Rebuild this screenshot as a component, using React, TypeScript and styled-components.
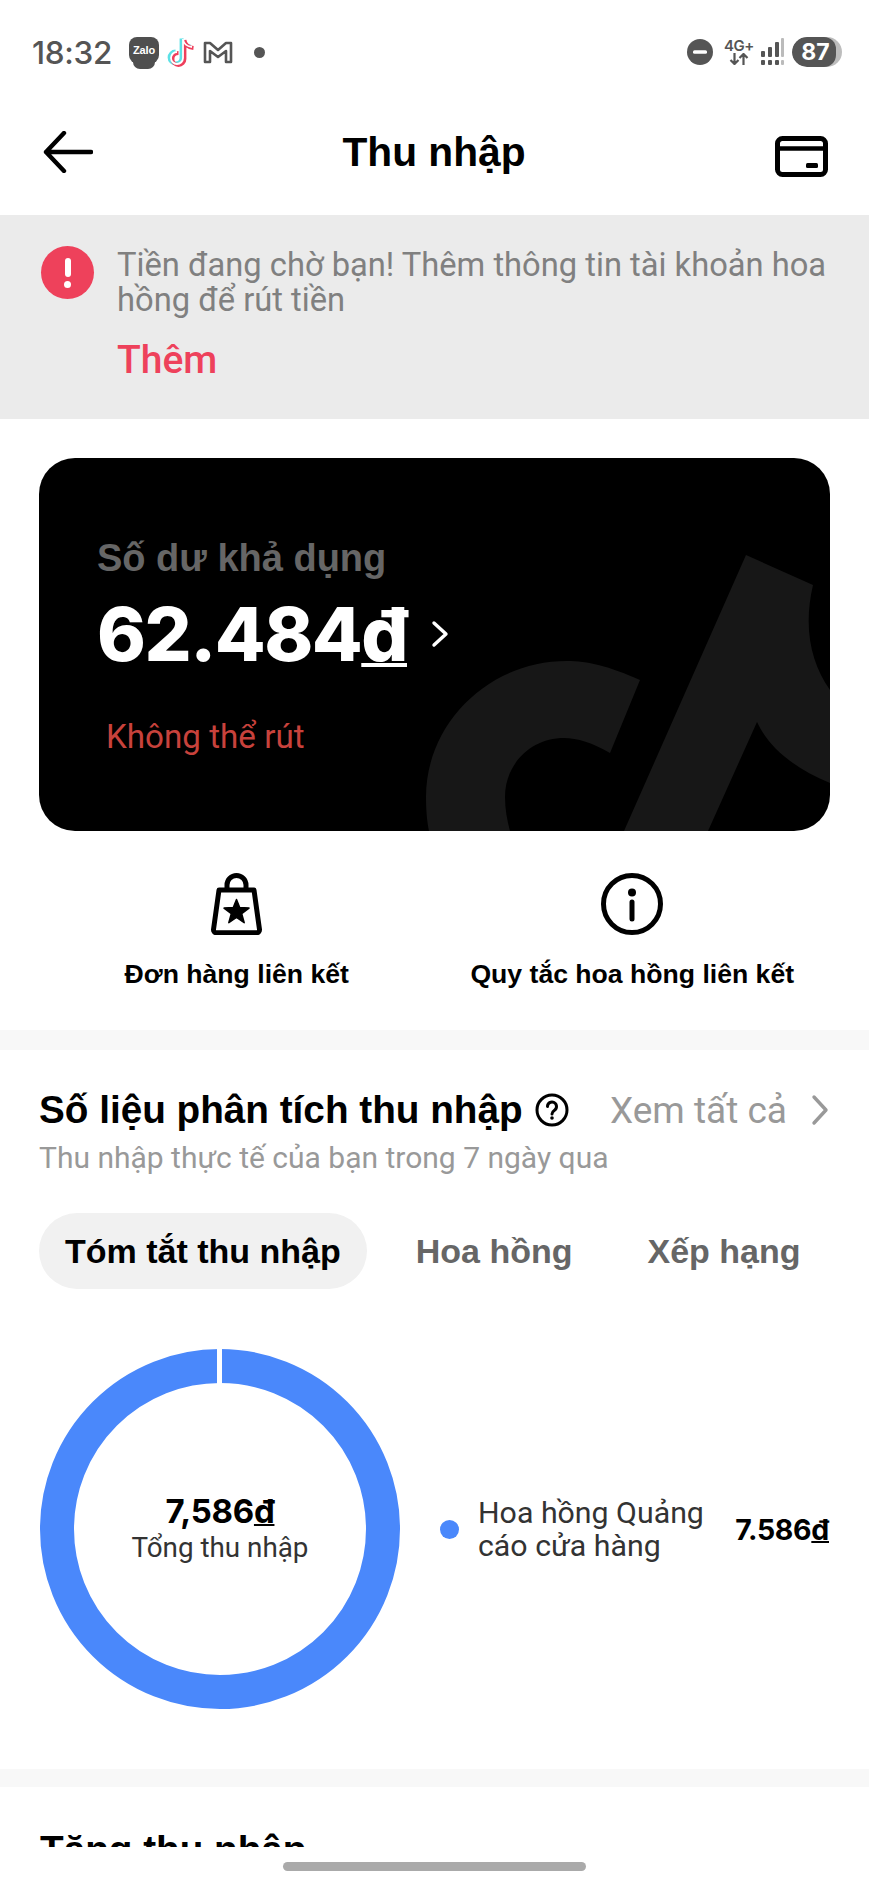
import React from "react";
import styled, { createGlobalStyle } from "styled-components";

const Global = createGlobalStyle`
  html, body { margin: 0; padding: 0; background: #fff; }
  * { box-sizing: border-box; }
`;

const Page = styled.div`
  position: relative;
  width: 869px;
  height: 1884px;
  overflow: hidden;
  background: #fff;
  font-family: Roboto, "Liberation Sans", sans-serif;
  color: #000;
`;

const StatusBar = styled.div`
  height: 88px;
  padding: 16px 27px 0 32px;
  display: flex;
  align-items: center;
  color: #555;
`;
const Time = styled.span`
  font-family: Inter, Roboto, sans-serif;
  font-size: 31.5px;
  font-weight: 500;
  width: 97px;
  letter-spacing: -0.3px;
`;
const StatusIcons = styled.div`
  display: flex;
  align-items: center;
  gap: 7px;
  flex: 1;
`;
const ZaloBadge = styled.span`
  position: relative;
  width: 30px;
  height: 27px;
  margin-bottom: 4px;
  border-radius: 8px 8px 9px 9px;
  background: #4f4f4f;
  color: #fff;
  font-family: "Liberation Sans", sans-serif;
  font-size: 11px;
  font-weight: 700;
  display: flex;
  align-items: center;
  justify-content: center;
  letter-spacing: -0.2px;
  &::after {
    content: "";
    position: absolute;
    left: 4px;
    bottom: -5px;
    width: 22px;
    height: 7px;
    border-radius: 0 0 10px 10px;
    background: #4f4f4f;
  }
`;
const StatusDot = styled.span`
  width: 11px;
  height: 11px;
  border-radius: 50%;
  background: #555;
  margin-left: 14px;
`;
const StatusRight = styled.div`
  display: flex;
  align-items: center;
`;
const Network = styled.div`
  width: 34px;
  margin-left: 9px;
  display: flex;
  flex-direction: column;
  align-items: center;
  font-family: Inter, sans-serif;
  font-size: 15px;
  line-height: 14px;
  font-weight: 600;
  letter-spacing: -0.5px;
`;
const Battery = styled.div`
  position: relative;
  width: 50px;
  height: 30px;
  margin-left: 8px;
  border-radius: 15px;
  background: #bdbdbd;
  overflow: hidden;
`;
const BatteryFill = styled.div`
  width: 44px;
  height: 30px;
  border-radius: 15px 12px 12px 15px;
  background: #555;
  color: #fff;
  font-family: Inter, sans-serif;
  font-size: 23px;
  font-weight: 700;
  display: flex;
  align-items: center;
  justify-content: center;
  padding-left: 3px;
`;

const Header = styled.header`
  height: 127px;
  padding: 0 41px 0 43px;
  display: flex;
  align-items: center;
  justify-content: space-between;
`;
const WalletIcon = styled.svg`
  margin-top: 9px;
`;
const Title = styled.h1`
  margin: 0;
  font-family: "Liberation Sans", sans-serif;
  font-size: 40.7px;
  line-height: 48px;
  font-weight: 700;
`;

const Banner = styled.section`
  height: 204px;
  background: #ebebeb;
  padding: 31px 30px 0 41px;
  display: flex;
  gap: 23px;
`;
const AlertIcon = styled.span`
  flex: none;
  width: 53px;
  height: 53px;
  border-radius: 50%;
  background: #ee415b;
  display: flex;
  flex-direction: column;
  align-items: center;
  padding-top: 12px;
  gap: 4px;
`;
const AlertBar = styled.i`
  display: block;
  width: 6px;
  height: 19px;
  border-radius: 3px;
  background: #fff;
`;
const AlertDot = styled.i`
  display: block;
  width: 7px;
  height: 7px;
  border-radius: 50%;
  background: #fff;
`;
const BannerBody = styled.div`
  flex: 1;
  padding-top: 2px;
`;
const BannerText = styled.p`
  margin: 0;
  font-size: 32.7px;
  line-height: 35px;
  color: #808080;
`;
const BannerLink = styled.a`
  display: block;
  margin-top: 20px;
  font-size: 39px;
  line-height: 44px;
  font-weight: 500;
  color: #ee415b;
`;

const Card = styled.section`
  position: relative;
  margin: 39px 39px 0;
  height: 373px;
  border-radius: 36px;
  background: #000;
  overflow: hidden;
  padding: 78px 0 0 58px;
`;
const CardLogo = styled.svg`
  position: absolute;
  inset: 0;
  width: 100%;
  height: 100%;
`;
const CardInner = styled.div`
  position: relative;
`;
const BalanceLabel = styled.div`
  font-family: "Liberation Sans", sans-serif;
  font-size: 38px;
  line-height: 44px;
  font-weight: 700;
  color: #666;
`;
const BalanceRow = styled.div`
  margin-top: 14px;
  display: flex;
  align-items: center;
  gap: 24px;
  height: 80px;
`;
const BalanceValue = styled.span`
  font-family: Inter, sans-serif;
  font-size: 74px;
  line-height: 80px;
  font-weight: 800;
  color: #fff;
  letter-spacing: -1.5px;
`;
const Currency = styled.span`
  text-decoration: underline;
  text-decoration-thickness: 0.06em;
  text-underline-offset: 0.03em;
`;
const BalanceNote = styled.div`
  margin: 43px 0 0 9px;
  font-size: 33.2px;
  line-height: 40px;
  color: #c8423c;
`;

const Actions = styled.nav`
  display: grid;
  grid-template-columns: 1fr 1fr;
  padding: 42px 39px 38px;
`;
const Action = styled.a`
  display: flex;
  flex-direction: column;
  align-items: center;
  gap: 21px;
`;
const ActionLabel = styled.span`
  font-family: "Liberation Sans", sans-serif;
  font-size: 26.6px;
  line-height: 36px;
  font-weight: 700;
  white-space: nowrap;
`;

const Gap = styled.div<{ $h: number }>`
  height: ${(p) => p.$h}px;
  background: #f8f8f8;
`;

const Section = styled.section`
  padding: 40px 40px 60px 39px;
`;
const SectionHead = styled.div`
  display: flex;
  align-items: center;
  height: 40px;
`;
const SectionTitle = styled.h2`
  margin: 0;
  font-family: "Liberation Sans", sans-serif;
  font-size: 38.7px;
  line-height: 40px;
  font-weight: 700;
  white-space: nowrap;
`;
const HelpIcon = styled.svg`
  margin-left: 12px;
  flex: none;
`;
const SeeAll = styled.a`
  margin-left: auto;
  display: flex;
  align-items: center;
  gap: 24px;
  font-size: 37px;
  color: #999;
  white-space: nowrap;
`;
const SectionSub = styled.p`
  margin: 10px 0 0;
  font-size: 30px;
  line-height: 36px;
  color: #999;
`;
const Tabs = styled.div`
  margin-top: 37px;
  display: flex;
  gap: 23px;
`;
const Tab = styled.button<{ $active?: boolean }>`
  height: 76px;
  padding: 0 26px;
  border: 0;
  border-radius: 38px;
  background: ${(p) => (p.$active ? "#f1f1f1" : "transparent")};
  color: ${(p) => (p.$active ? "#000" : "#666")};
  font-family: "Liberation Sans", sans-serif;
  font-size: 34px;
  font-weight: 700;
  white-space: nowrap;
`;
const ChartRow = styled.div`
  margin: 60px 0 0 1px;
  display: flex;
  align-items: center;
`;
const Ring = styled.div`
  position: relative;
  width: 360px;
  height: 360px;
  flex: none;
`;
const RingCenter = styled.div`
  position: absolute;
  inset: 0;
  display: flex;
  flex-direction: column;
  align-items: center;
  justify-content: center;
`;
const RingValue = styled.span`
  font-family: Inter, sans-serif;
  font-size: 33px;
  line-height: 38px;
  font-weight: 700;
  letter-spacing: -0.3px;
`;
const RingLabel = styled.span`
  font-size: 27.8px;
  line-height: 36px;
  color: #333;
`;
const LegendDot = styled.span`
  flex: none;
  width: 19px;
  height: 19px;
  border-radius: 50%;
  background: #4a88fb;
  margin-left: 40px;
`;
const LegendText = styled.div`
  margin-left: 19px;
  width: 245px;
  font-size: 30.3px;
  line-height: 33px;
  color: #333;
`;
const LegendValue = styled.span`
  margin-left: auto;
  font-family: Inter, sans-serif;
  font-size: 28.5px;
  font-weight: 700;
  white-space: nowrap;
  letter-spacing: -0.3px;
`;
const NextSection = styled.section`
  padding: 43px 40px 0;
`;

const HomeStrip = styled.div`
  position: absolute;
  left: 0;
  right: 0;
  bottom: 0;
  height: 37px;
  background: #fff;
  display: flex;
  justify-content: center;
  padding-top: 15px;
`;
const HomeBar = styled.span`
  width: 303px;
  height: 9px;
  border-radius: 5px;
  background: #aaa;
`;

const Underlined = ({ children }: { children: React.ReactNode }) => <Currency>{children}</Currency>;

export default function App() {
  return (
    <Page>
      <Global />
      <StatusBar>
        <Time>18:32</Time>
        <StatusIcons>
          <ZaloBadge>Zalo</ZaloBadge>
          <svg width="30" height="34" viewBox="0 0 30 34" fill="none" strokeWidth="3.8">
            <path d="M17 4v19a6 6 0 1 1-6-6M17 4c.5 4.200 3.800 7.400 9 8" stroke="#5ce1e6" transform="translate(-1.500 -0.500)" />
            <path d="M17 4v19a6 6 0 1 1-6-6M17 4c.5 4.200 3.800 7.400 9 8" stroke="#ee3f5c" transform="translate(1.500 1)" />
            <path d="M17 4v19a6 6 0 1 1-6-6M17 4c.5 4.200 3.800 7.400 9 8" stroke="#fff" strokeWidth="1.800" />
          </svg>
          <svg width="30" height="24" viewBox="0 0 30 24" fill="none" stroke="#555" strokeWidth="2.600" strokeLinejoin="round">
            <path d="M2 3h5l8 7 8-7h5v19h-5V11l-8 6-8-6v11H2z" />
          </svg>
          <StatusDot />
        </StatusIcons>
        <StatusRight>
          <svg width="26" height="26" viewBox="0 0 26 26">
            <circle cx="13" cy="13" r="13" fill="#555" />
            <rect x="6" y="11.200" width="14" height="3.600" rx="1.500" fill="#fff" />
          </svg>
          <Network>
            4G+
            <svg width="20" height="12" viewBox="0 0 20 12" fill="none" stroke="#555" strokeWidth="2.200">
              <path d="M5.500 0v11M1.500 7l4 4 4-4M14.500 12V1M10.500 5l4-4 4 4" />
            </svg>
          </Network>
          <svg width="24" height="30" viewBox="0 0 24 30" style={{ marginLeft: 4 }}>
            <g fill="#555">
              <rect x="1" y="14" width="4" height="6" rx="1" />
              <rect x="8" y="10" width="4" height="10" rx="1" />
              <rect x="15" y="5" width="4" height="15" rx="1" />
              <rect x="1" y="23" width="4" height="5" rx="1" />
              <rect x="8" y="23" width="4" height="5" rx="1" />
              <rect x="15" y="23" width="4" height="5" rx="1" />
            </g>
            <rect x="21" y="1" width="3" height="19" rx="1" fill="#bbb" />
            <rect x="21" y="23" width="3" height="5" rx="1" fill="#bbb" />
          </svg>
          <Battery>
            <BatteryFill>87</BatteryFill>
          </Battery>
        </StatusRight>
      </StatusBar>

      <Header>
        <svg width="50" height="42" viewBox="0 0 50 42" fill="none" stroke="#000" strokeWidth="4.400" strokeLinecap="round" strokeLinejoin="round">
          <path d="M48 21H3M21 2 3 21l18 19" />
        </svg>
        <Title>Thu nhập</Title>
        <WalletIcon width="53" height="41" viewBox="0 0 53 41" fill="none" stroke="#000" strokeWidth="5" strokeLinejoin="round">
          <rect x="2.500" y="2.500" width="48" height="36" rx="5" />
          <path d="M2 12.500h49" strokeWidth="4.500" />
          <rect x="31" y="27" width="12" height="5" rx="1.500" fill="#000" stroke="none" />
        </WalletIcon>
      </Header>

      <Banner>
        <AlertIcon>
          <AlertBar />
          <AlertDot />
        </AlertIcon>
        <BannerBody>
          <BannerText>Tiền đang chờ bạn! Thêm thông tin tài khoản hoa hồng để rút tiền</BannerText>
          <BannerLink>Thêm</BannerLink>
        </BannerBody>
      </Banner>

      <Card>
        <CardLogo viewBox="0 0 791 373" preserveAspectRatio="none">
          <path
            fill="#171717"
            d="M707 97 774 127 C764 170 772 205 791 232 L791 325 C755 310 730 290 718 264 L669 373 L585 373 Z"
          />
          <path
            fill="#171717"
            d="M601 222 C570 208 548 203 528 203 C450 203 387 265 387 339 C387 352 388 364 390 373 L471 373 C468 362 466 351 466 339 C466 306 492 280 525 280 C538 280 554 285 571 295 Z"
          />
        </CardLogo>
        <CardInner>
          <BalanceLabel>Số dư khả dụng</BalanceLabel>
          <BalanceRow>
            <BalanceValue>
              62.484<Underlined>đ</Underlined>
            </BalanceValue>
            <svg width="18" height="28" viewBox="0 0 18 28" fill="none" stroke="#fff" strokeWidth="3.400" strokeLinecap="round" strokeLinejoin="round">
              <path d="M3 3l12 11L3 25" />
            </svg>
          </BalanceRow>
          <BalanceNote>Không thể rút</BalanceNote>
        </CardInner>
      </Card>

      <Actions>
        <Action>
          <svg width="55" height="62" viewBox="0 0 55 62" fill="none" stroke="#000" strokeWidth="5" strokeLinejoin="round">
            <path d="M10 17h35l5.500 39.500a3 3 0 0 1-3 3.300H7.500a3 3 0 0 1-3-3.300z" />
            <path d="M18 18v-6a9.500 9.500 0 0 1 19 0v6" />
            <path
              fill="#000"
              stroke="#000"
              strokeWidth="1.500"
              d="M27.500 26.500l3.200 8.100 9.300.5-7.300 5.600 2.500 9-7.700-5.200-7.700 5.200 2.500-9-7.300-5.600 9.300-.5z"
            />
          </svg>
          <ActionLabel>Đơn hàng liên kết</ActionLabel>
        </Action>
        <Action>
          <svg width="62" height="62" viewBox="0 0 62 62" fill="none" stroke="#000" strokeWidth="5">
            <circle cx="31" cy="31" r="28.500" />
            <circle cx="31" cy="19.500" r="4" fill="#000" stroke="none" />
            <path d="M31 29v17" strokeWidth="5" strokeLinecap="round" />
          </svg>
          <ActionLabel>Quy tắc hoa hồng liên kết</ActionLabel>
        </Action>
      </Actions>

      <Gap $h={20} />

      <Section>
        <SectionHead>
          <SectionTitle>Số liệu phân tích thu nhập</SectionTitle>
          <HelpIcon width="34" height="34" viewBox="0 0 34 34" fill="none" stroke="#000" strokeWidth="3">
            <circle cx="17" cy="17" r="15" />
            <path d="M12.500 13.500a4.500 4.500 0 1 1 7 3.700c-1.500 1-2.500 1.800-2.500 3.800" strokeLinecap="round" />
            <circle cx="17" cy="25" r="1.800" fill="#000" stroke="none" />
          </HelpIcon>
          <SeeAll>
            Xem tất cả
            <svg width="18" height="32" viewBox="0 0 18 32" fill="none" stroke="#999" strokeWidth="3.400" strokeLinecap="round" strokeLinejoin="round">
              <path d="M3 3l12 13L3 29" />
            </svg>
          </SeeAll>
        </SectionHead>
        <SectionSub>Thu nhập thực tế của bạn trong 7 ngày qua</SectionSub>
        <Tabs>
          <Tab $active>Tóm tắt thu nhập</Tab>
          <Tab>Hoa hồng</Tab>
          <Tab>Xếp hạng</Tab>
        </Tabs>
        <ChartRow>
          <Ring>
            <svg width="360" height="360" viewBox="0 0 360 360">
              <circle cx="180" cy="180" r="163" fill="none" stroke="#4a88fb" strokeWidth="34" />
              <rect x="177" y="0" width="5" height="36" fill="#fff" />
            </svg>
            <RingCenter>
              <RingValue>
                7,586<Underlined>đ</Underlined>
              </RingValue>
              <RingLabel>Tổng thu nhập</RingLabel>
            </RingCenter>
          </Ring>
          <LegendDot />
          <LegendText>Hoa hồng Quảng cáo cửa hàng</LegendText>
          <LegendValue>
            7.586<Underlined>đ</Underlined>
          </LegendValue>
        </ChartRow>
      </Section>

      <Gap $h={18} />

      <NextSection>
        <SectionTitle>Tăng thu nhập</SectionTitle>
      </NextSection>

      <HomeStrip>
        <HomeBar />
      </HomeStrip>
    </Page>
  );
}
